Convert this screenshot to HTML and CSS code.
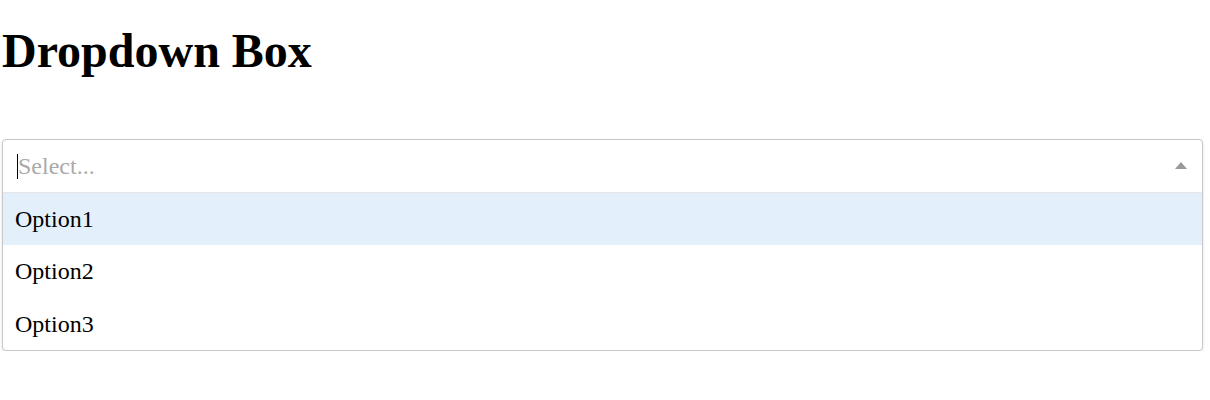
FILE: index.html
```html
<!DOCTYPE html>
<html lang="en">
<head>
<meta charset="utf-8">
<title>Dropdown Box</title>
<link rel="stylesheet" href="styles.css">
</head>
<body>
<main class="page">
  <h1 class="title">Dropdown Box</h1>
  <div class="dropdown">
    <div class="control">
      <span class="caret" aria-hidden="true"></span>
      <input class="search" type="text" placeholder="Select...">
      <svg class="arrow" width="12" height="7" viewBox="0 0 12 7" aria-hidden="true"><polygon points="0,7 6,0 12,7" fill="#999"/></svg>
    </div>
    <ul class="menu">
      <li class="option active">Option1</li>
      <li class="option">Option2</li>
      <li class="option">Option3</li>
    </ul>
  </div>
</main>
</body>
</html>
```
FILE: styles.css
```css
html, body {
  margin: 0;
  padding: 0;
  background: #fff;
}
.page {
  padding: 0 8px 0 2px;
  font-family: "Liberation Serif", "Times New Roman", serif;
  color: #000;
}
.title {
  font-size: 48px;
  font-weight: bold;
  margin: 23px 0 61px;
  line-height: normal;
}
.dropdown {
  width: 1199px;
  border: 1px solid #c8c8c8;
  border-radius: 4px;
  box-shadow: 0 1px 3px rgba(0, 0, 0, 0.12);
  background: #fff;
  overflow: hidden;
}
.control {
  display: flex;
  align-items: center;
  height: 52px;
  border-bottom: 1px solid #e6e6e6;
  padding: 0 15px 0 14px;
}
.caret {
  width: 1px;
  height: 25px;
  background: #000;
  flex: none;
}
.search {
  flex: 1;
  border: none;
  outline: none;
  padding: 0;
  font-family: "Liberation Serif", "Times New Roman", serif;
  font-size: 24px;
  color: #000;
  background: transparent;
  caret-color: transparent;
}
.search::placeholder {
  color: #aaa;
}
.arrow {
  display: block;
  margin-top: -2px;
}
.menu {
  list-style: none;
  margin: 0;
  padding: 0;
}
.option {
  font-size: 24px;
  line-height: 28px;
  padding: 12px 12px 12.33px;
}
.option.active {
  background: #e3f0fc;
}
```
